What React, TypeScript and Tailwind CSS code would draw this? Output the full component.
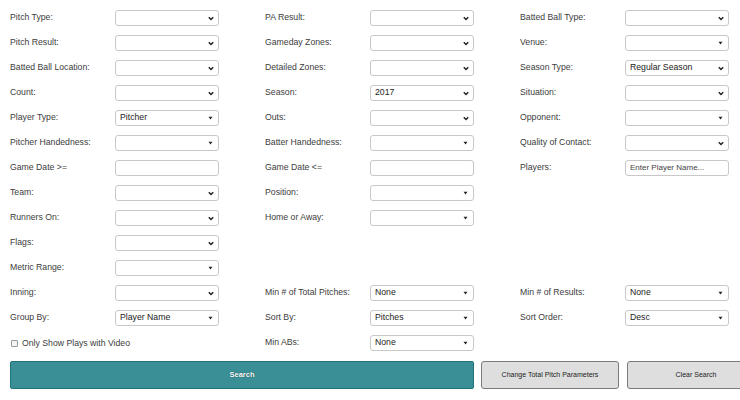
import React from "react";

type Arrow = "chev" | "tri";
type Field =
  | { kind: "select"; label: string; value?: string; arrow: Arrow }
  | { kind: "input"; label: string; placeholder?: string }
  | { kind: "check"; label: string }
  | { kind: "empty" };

const S = (label: string, arrow: Arrow = "chev", value?: string): Field => ({ kind: "select", label, value, arrow });
const I = (label: string, placeholder?: string): Field => ({ kind: "input", label, placeholder });
const E: Field = { kind: "empty" };

const rows: Field[][] = [
  [S("Pitch Type:"), S("PA Result:"), S("Batted Ball Type:")],
  [S("Pitch Result:"), S("Gameday Zones:"), S("Venue:", "tri")],
  [S("Batted Ball Location:"), S("Detailed Zones:"), S("Season Type:", "chev", "Regular Season")],
  [S("Count:"), S("Season:", "chev", "2017"), S("Situation:")],
  [S("Player Type:", "tri", "Pitcher"), S("Outs:"), S("Opponent:", "tri")],
  [S("Pitcher Handedness:", "tri"), S("Batter Handedness:", "tri"), S("Quality of Contact:")],
  [I("Game Date >="), I("Game Date <="), I("Players:", "Enter Player Name...")],
  [S("Team:"), S("Position:", "tri"), E],
  [S("Runners On:"), S("Home or Away:", "tri"), E],
  [S("Flags:"), E, E],
  [S("Metric Range:", "tri"), E, E],
  [S("Inning:"), S("Min # of Total Pitches:", "tri", "None"), S("Min # of Results:", "tri", "None")],
  [S("Group By:", "tri", "Player Name"), S("Sort By:", "tri", "Pitches"), S("Sort Order:", "tri", "Desc")],
  [{ kind: "check", label: "Only Show Plays with Video" }, S("Min ABs:", "tri", "None"), E],
];

function ArrowIcon({ type }: { type: Arrow }) {
  if (type === "chev") {
    return (
      <svg width="6" height="5" viewBox="0 0 6 5" className="mr-[4px] shrink-0">
        <path d="M0.8 1.2 L3 3.5 L5.2 1.2" fill="none" stroke="#222" strokeWidth="1.5" />
      </svg>
    );
  }
  return (
    <svg width="5" height="4" viewBox="0 0 5 4" className="mr-[5px] shrink-0">
      <path d="M0.5 0.8 L4.5 0.8 L2.5 3.6 Z" fill="#222" />
    </svg>
  );
}

function Cell({ f }: { f: Field }) {
  if (f.kind === "empty") return <div className="h-[16px]" />;
  if (f.kind === "check") {
    return (
      <div className="flex h-[16px] items-center pt-[1px]">
        <span className="ml-[1px] h-[7px] w-[7px] rounded-[1px] border border-[#999] bg-[#f4f4f4]" />
        <span className="ml-[4px] text-[8.7px] text-[#3c3c3c]">{f.label}</span>
      </div>
    );
  }
  return (
    <div className="flex h-[16px] items-center">
      <div className="w-[105px] pb-[1px] text-[8.7px] text-[#3c3c3c] whitespace-nowrap">{f.label}</div>
      {f.kind === "select" ? (
        <div className="flex h-[16px] w-[104px] items-center justify-between rounded-[3px] border border-[#c8c8c8] bg-white">
          <span className="pl-[4px] text-[8.7px] text-[#222]">{f.value ?? ""}</span>
          <ArrowIcon type={f.arrow} />
        </div>
      ) : (
        <div className="flex h-[16px] w-[104px] items-center rounded-[3px] border border-[#c8c8c8] bg-white">
          <span className="pl-[4px] text-[8px] text-[#444]">{f.placeholder ?? ""}</span>
        </div>
      )}
    </div>
  );
}

export default function App() {
  return (
    <div
      className="h-[400px] w-[740px] overflow-hidden bg-white"
      style={{ fontFamily: '"Liberation Sans", Arial, sans-serif' }}
    >
      <div className="grid grid-cols-[255px_255px_230px] gap-y-[9px] pl-[10px] pt-[10px]">
        {rows.flat().map((f, i) => (
          <Cell key={i} f={f} />
        ))}
      </div>
      <div className="mt-[10px] flex w-[800px] gap-[7px] pl-[10px]">
        <button className="flex h-[28px] w-[464px] items-center justify-center rounded-[2px] border border-[#1f7379] bg-[#3a8f96] text-[7.5px] font-bold text-white [text-shadow:0_0_1px_#0a3033]">
          Search
        </button>
        <button className="flex h-[28px] w-[138px] items-center justify-center rounded-[3px] border border-[#7a7a7a] bg-[#dedede] text-[7px] text-[#222]">
          Change Total Pitch Parameters
        </button>
        <button className="ml-[1px] flex h-[28px] w-[138px] items-center justify-center rounded-[3px] border border-[#7a7a7a] bg-[#dedede] text-[7px] text-[#222]">
          Clear Search
        </button>
      </div>
    </div>
  );
}
